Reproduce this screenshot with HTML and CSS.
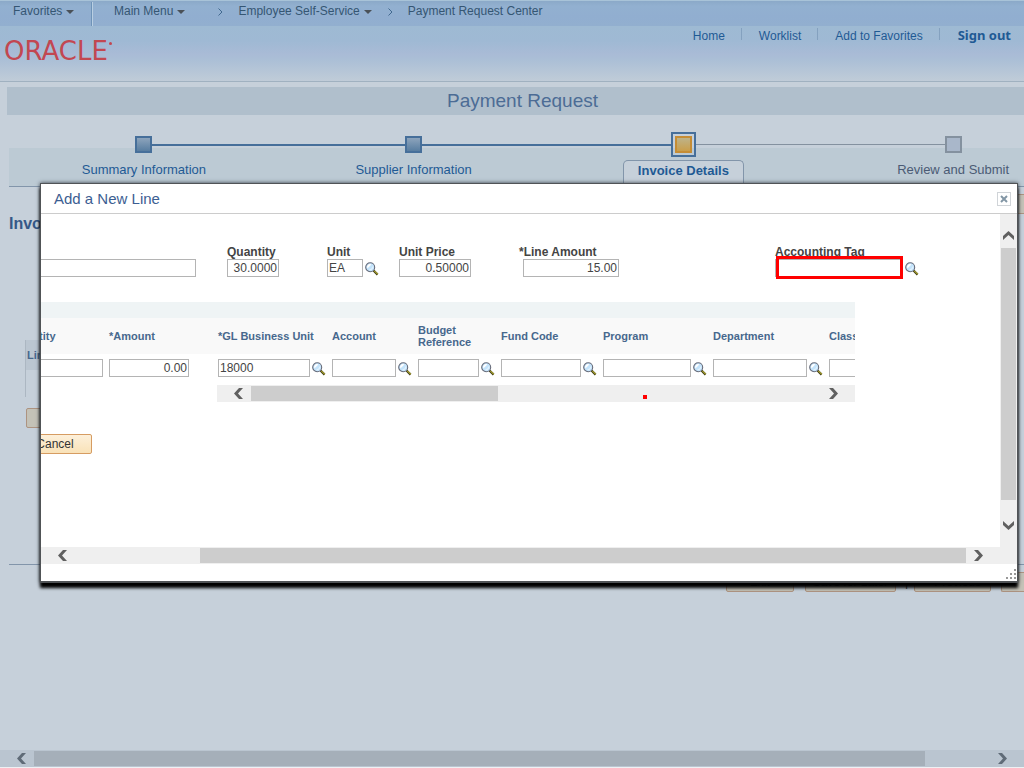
FILE: index.html
```html
<!DOCTYPE html>
<html lang="en">
<head>
<meta charset="utf-8">
<title>Payment Request</title>
<link rel="stylesheet" href="styles.css">
</head>
<body>
<svg class="defs" aria-hidden="true">
  <symbol id="lookup" viewBox="0 0 14 14">
    <path d="M8.5 8.5 12.6 12.6" stroke="#3c3a14" stroke-width="2.2"/>
    <path d="M9.3 8.9 12.8 12.2" stroke="#a8a030" stroke-width="1.2"/>
    <circle cx="5.2" cy="5.2" r="4.5" fill="#c4e4fc" stroke="#666a78" stroke-width="1.1"/>
    <path d="M2.4 6.4A3 3 0 0 1 6.4 2.4Z" fill="#fff"/>
    <path d="M4.6 7.8A3 3 0 0 0 7.8 4.6" fill="none" stroke="#edf8ff" stroke-width="1"/>
  </symbol>
  <symbol id="chev" viewBox="0 0 11 11">
    <path d="M1 5.5 6 0H10L5 5.5 10 11H6Z" fill="currentColor"/>
  </symbol>
</svg>
<div class="page">
  <nav class="crumbs">
    <a class="fav" href="#">Favorites<i class="caret"></i></a>
    <a class="main" href="#">Main Menu<i class="caret"></i></a>
    <svg class="sep" viewBox="0 0 5 8"><path d="M.5.5 4 4 .5 7.5"/></svg>
    <a href="#">Employee Self-Service<i class="caret"></i></a>
    <svg class="sep" viewBox="0 0 5 8"><path d="M.5.5 4 4 .5 7.5"/></svg>
    <a href="#">Payment Request Center</a>
  </nav>
  <header class="banner">
    <span class="logo">ORACLE<i class="dot"></i></span>
    <div class="links">
      <a href="#">Home</a><a href="#">Worklist</a><a href="#">Add to Favorites</a><a class="out" href="#">Sign out</a>
    </div>
  </header>
  <h1 class="title">Payment Request</h1>
  <ol class="train">
    <li class="step first"><div class="track"><i></i><b></b><i class="done"></i></div><a href="#">Summary Information</a></li>
    <li class="step"><div class="track"><i class="done"></i><b></b><i class="done"></i></div><a href="#">Supplier Information</a></li>
    <li class="step active"><div class="track"><i class="done"></i><span class="ring"><b></b></span><i class="todo"></i></div><a href="#">Invoice Details</a></li>
    <li class="step next"><div class="track"><i class="todo"></i><b></b><i></i></div><a href="#">Review and Submit</a></li>
  </ol>
  <main class="content">
    <div class="top"><button class="btn edge" type="button" aria-label="Next"></button></div>
    <h2>Invoice Details</h2>
    <table class="lines"><thead><tr><th>Line</th></tr></thead><tbody><tr><td></td></tr></tbody></table>
    <button class="btn add" type="button" aria-label="Add line"></button>
  </main>
  <div class="actions">
    <button class="btn exit" type="button">Exit</button>
    <button class="btn save" type="button">Save for Later</button>
    <span>|</span>
    <button class="btn prev" type="button">&lt; Previous</button>
    <button class="btn edge" type="button" aria-label="Next"></button>
  </div>
  <div class="hbar outer"><svg class="chev"><use href="#chev"/></svg><i class="thumb"></i><svg class="chev right"><use href="#chev"/></svg></div>

  <section class="dialog" role="dialog" aria-labelledby="dlg">
    <div class="head"><h3 id="dlg">Add a New Line</h3>
      <button class="close" type="button" aria-label="Close"><svg viewBox="0 0 8 8"><path d="M1 1 7 7M7 1 1 7"/></svg></button>
    </div>
    <div class="body">
      <div class="view">
        <div class="canvas">
          <div class="fields">
            <div class="field"><span>&nbsp;</span><input class="w185" aria-label="Description"></div>
            <div class="field"><label for="qty">Quantity</label><input id="qty" class="num w52" value="30.0000"></div>
            <div class="field"><label for="unit">Unit</label><div class="look"><input id="unit" class="w36" value="EA"><svg><use href="#lookup"/></svg></div></div>
            <div class="field"><label for="price">Unit Price</label><input id="price" class="num w72" value="0.50000"></div>
            <div class="field amount"><label for="amt">*Line Amount</label><input id="amt" class="num w96" value="15.00"></div>
            <div class="field tag"><label for="tag">Accounting Tag</label><div class="look"><input id="tag" class="w128"><svg><use href="#lookup"/></svg></div><i class="mark"></i></div>
          </div>
          <div class="grid">
            <div class="strip"></div>
            <table class="dist">
              <colgroup><col class="c1"><col class="c2"><col class="c3"><col class="c4"><col class="c5"><col class="c6"><col class="c7"><col class="c8"><col class="c9"></colgroup>
              <thead><tr><th>Quantity</th><th>*Amount</th><th>*GL Business Unit</th><th>Account</th><th>Budget Reference</th><th>Fund Code</th><th>Program</th><th>Department</th><th>Class</th></tr></thead>
              <tbody><tr>
                <td><input class="w92" aria-label="Quantity"></td>
                <td><input class="num w80" value="0.00" aria-label="Amount"></td>
                <td><div class="look"><input class="w92" value="18000" aria-label="GL Business Unit"><svg><use href="#lookup"/></svg></div></td>
                <td><div class="look"><input class="w64" aria-label="Account"><svg><use href="#lookup"/></svg></div></td>
                <td><div class="look"><input class="w61" aria-label="Budget Reference"><svg><use href="#lookup"/></svg></div></td>
                <td><div class="look"><input class="w80" aria-label="Fund Code"><svg><use href="#lookup"/></svg></div></td>
                <td><div class="look"><input class="w88" aria-label="Program"><svg><use href="#lookup"/></svg></div></td>
                <td><div class="look"><input class="w94" aria-label="Department"><svg><use href="#lookup"/></svg></div></td>
                <td><input class="w64" aria-label="Class"></td>
              </tr></tbody>
            </table>
            <div class="hbar inner"><svg class="chev"><use href="#chev"/></svg><i class="thumb"></i><svg class="chev right"><use href="#chev"/></svg><i class="spot"></i></div>
          </div>
          <button class="btn cancel" type="button">Cancel</button>
        </div>
        <div class="vbar"><svg class="chev up"><use href="#chev"/></svg><i class="thumb"></i><svg class="chev down"><use href="#chev"/></svg></div>
      </div>
      <div class="hbar mid"><svg class="chev"><use href="#chev"/></svg><i class="thumb"></i><svg class="chev right"><use href="#chev"/></svg></div>
    </div>
    <div class="foot"><svg viewBox="0 0 10 10"><path d="M8 0h2v2h-2zM4 4h2v2h-2zM8 4h2v2h-2zM0 8h2v2h-2zM4 8h2v2h-2zM8 8h2v2h-2z" fill="#999"/></svg></div>
  </section>
</div>
</body>
</html>
```

FILE: styles.css
```css
* { box-sizing: border-box; }
body { margin: 0; font: 12px "Liberation Sans", Arial, sans-serif; color: #444; background: #c6d0da; }
a { color: inherit; text-decoration: none; }
h1, h2, h3, ol { margin: 0; padding: 0; font-weight: normal; }
.defs { position: absolute; width: 0; height: 0; }
.page { position: relative; display: flex; flex-direction: column; min-height: 100vh; overflow: hidden; border-bottom: 1px solid #eef1f4; }

.crumbs { display: flex; align-items: flex-start; height: 26px; padding: 3px 0 0 13px; line-height: 14px; color: #355673; border-top: 1px solid #a8c3d8; background: linear-gradient(#8ba9c8, #92b0d0 5px, #91aed0 16px, #92afcf); }
.caret { display: inline-block; margin: 0 0 1px 4px; border: 4px solid transparent; border-top-color: #4a5158; border-bottom: 0; }
.fav { width: 79px; height: 24px; margin-top: -2px; padding-top: 2px; border-right: 1px solid #6e93b8; box-shadow: 1px 0 #b9cfe2; }
.main { margin-left: 22px; }
.sep { width: 5px; height: 8px; margin: 4px 15px 0 33px; fill: none; stroke: #41698f; }
.sep + a + .sep { margin-left: 16px; }

.banner { display: flex; justify-content: space-between; height: 56px; border-bottom: 1px solid #a0b1c0; background: linear-gradient(#9ebad3, #9fb9d4 15px, #a9bbd6 28px, #abbfd6 34px, #c0ccd8); }
.logo { padding: 13px 0 0 4px; font: 26px/24px "DejaVu Sans", Verdana, sans-serif; color: #c24751; }
.dot { display: inline-block; width: 3px; height: 3px; margin-left: 1px; vertical-align: 15px; background: #c24751; border-radius: 2px; }
.links { display: flex; height: 12px; margin: 2px 13px 0 0; color: #1f5a94; line-height: 16px; }
.links a { padding: 0 16px 0 17px; border-left: 1px solid #84a1bf; }
.links a:first-child { border: 0; }
.links .out { padding: 0 0 0 18px; font: bold 13px/15px "Noto Sans", sans-serif; }

.title { margin: 5px 0 0 7px; padding-left: 14px; background: #b0bfcc; color: #4c6c95; font-size: 19px; line-height: 28px; text-align: center; }
.train { display: flex; width: calc(100% + 55px); margin-left: 9px; padding-top: 17px; list-style: none; border-bottom: 1px solid #8295aa; background: linear-gradient(#c6d0da 33px, #bccad4 33px); }
.step { flex: 1; display: flex; flex-direction: column; align-items: center; height: 54px; font-size: 13px; line-height: 15px; color: #1f5a94; }
.step > a { margin-top: 5px; }
.track { display: flex; align-items: center; align-self: stretch; height: 25px; }
.track i { flex: 1; height: 2px; }
.track .done { background: #466f9a; }
.track .todo { height: 1px; background: #84919f; }
.track b { width: 17px; height: 17px; border: 2px solid #466f9a; background: linear-gradient(#8da4bc, #587da0); }
.ring { display: flex; padding: 2px; border: 2px solid #466f9a; }
.track .ring b { border-color: #c58d35; background: linear-gradient(#beb389, #c99e4b); }
.next .track b { border-color: #84919f; background: #a9b7ca; }
.step.next { color: #4b5b75; }
.step.active > a { margin-top: 3px; padding: 2px 14px 6px; border: 1px solid #8295aa; border-bottom: 0; border-radius: 5px 5px 0 0; background: #c6d0da; font-weight: bold; }

.btn { height: 20px; padding: 0; border: 1px solid #ad9380; border-radius: 2px; background: #c4c2b7; color: #333; font: 12px "Liberation Sans", Arial, sans-serif; }
.content { padding: 7px 0 0 9px; }
.top { display: flex; justify-content: flex-end; }
.edge { width: 23px; border-right: 0; border-radius: 2px 0 0 2px; }
.content h2 { color: #355887; font-size: 16px; font-weight: bold; line-height: 20px; }
.lines { margin: 106px 0 11px 16px; border-collapse: collapse; border-left: 1px solid #acb7c2; }
.lines th { width: 60px; height: 30px; padding: 0 1px; background: #bbc6d1; color: #47688d; font-size: 11px; text-align: left; }
.lines td { height: 27px; padding: 0; }
.add { display: block; width: 60px; margin-left: 17px; }
.actions { display: flex; justify-content: flex-end; margin: 136px 0 0 9px; padding-top: 7px; border-top: 1px solid #8295aa; line-height: 20px; }
.exit { width: 68px; margin-right: 11px; }
.save { width: 91px; margin-right: 9px; }
.prev { width: 77px; margin: 0 10px 0 6px; }

.hbar { display: flex; align-items: center; height: 17px; background: #efefef; color: #606060; }
.thumb { background: #cdcdcd; }
.hbar .thumb { height: 15px; flex: 1; }
.chev { width: 11px; height: 11px; flex: none; }
.right { transform: rotate(180deg); }
.up { transform: rotate(90deg); }
.down { transform: rotate(-90deg); }
.outer { margin-top: auto; padding: 0 16px; background: #bac5d0; color: #5f6b77; }
.outer .thumb { margin: 0 72px 0 7px; background: #a5afb9; }

.dialog { position: absolute; top: 183px; left: 40px; right: 6px; border: 1px solid #505356; border-bottom-width: 2px; background: #fff; box-shadow: 0 5px 3px #000, 0 0 4px #333a42; }
.head { display: flex; justify-content: space-between; align-items: center; height: 30px; padding: 0 6px 0 13px; border-bottom: 1px solid #ccc; }
.head h3 { color: #3c5e92; font-size: 15px; }
.close { display: flex; align-items: center; justify-content: center; width: 14px; height: 14px; padding: 0; border: 1px solid #d0d4d8; background: #fff; }
.close svg { width: 8px; height: 8px; stroke: #8296a5; stroke-width: 2; }
.view { display: flex; overflow: hidden; }
.canvas { flex: 1; min-width: 0; margin-left: -30px; padding-bottom: 93px; }
.vbar { display: flex; flex-direction: column; align-items: center; width: 17px; padding: 16px 0; background: #efefef; color: #606060; }
.vbar .thumb { width: 15px; flex: 1; margin: 7px 0 20px; }
.mid { padding: 0 33px 0 16px; }
.mid .thumb { margin: 0 7px 0 132px; }
.foot { display: flex; justify-content: flex-end; align-items: flex-end; height: 17px; padding: 0 1px 2px; }
.foot svg { width: 10px; height: 10px; }

.fields { display: grid; grid-template-columns: 216px 100px 72px 120px 256px 1fr; padding-top: 31px; font-weight: bold; line-height: 14px; }
.field { position: relative; display: flex; flex-direction: column; align-items: flex-start; }
input { display: block; height: 18px; padding: 0 1px; border: 1px solid #b4b4b4; border-radius: 0; background: #fff; color: #444; font: 12px "Liberation Sans", Arial, sans-serif; }
.num { text-align: right; }
.look { display: flex; align-items: center; gap: 2px; }
.look svg { width: 14px; height: 14px; margin-top: 1px; }
.amount input { margin-left: 4px; }
.mark { position: absolute; top: 11px; left: 1px; width: 127px; height: 23px; border: 3px solid red; }
.w36 { width: 36px; } .w52 { width: 52px; } .w61 { width: 61px; } .w64 { width: 64px; } .w72 { width: 72px; }
.w80 { width: 80px; } .w88 { width: 88px; } .w92 { width: 92px; } .w94 { width: 94px; } .w96 { width: 96px; }
.w128 { width: 128px; } .w185 { width: 185px; }

.grid { width: 844px; margin-top: 25px; overflow: hidden; }
.strip { height: 16px; background: #eff4f5; }
.dist { width: 844px; table-layout: fixed; border-collapse: collapse; }
.dist th { height: 36px; padding: 0; background: #f9f9f9; color: #47688d; font-size: 11px; line-height: 12px; text-align: left; }
.dist td { height: 31px; padding: 0 0 3px; }
.c1 { width: 98px; } .c2 { width: 109px; } .c3 { width: 114px; } .c4 { width: 86px; } .c5 { width: 83px; }
.c6 { width: 102px; } .c7 { width: 110px; } .c8 { width: 116px; } .c9 { width: 26px; }
.inner { position: relative; margin-left: 206px; padding: 0 16px; }
.inner .thumb { flex: none; width: 247px; margin: 0 auto 0 7px; }
.spot { position: absolute; top: 10px; left: 426px; width: 4px; height: 4px; background: red; }
.cancel { display: block; width: 74px; margin: 32px 0 0 7px; border-color: #d69c62; background: linear-gradient(#fdf0da, #f9e2b8); }
```
